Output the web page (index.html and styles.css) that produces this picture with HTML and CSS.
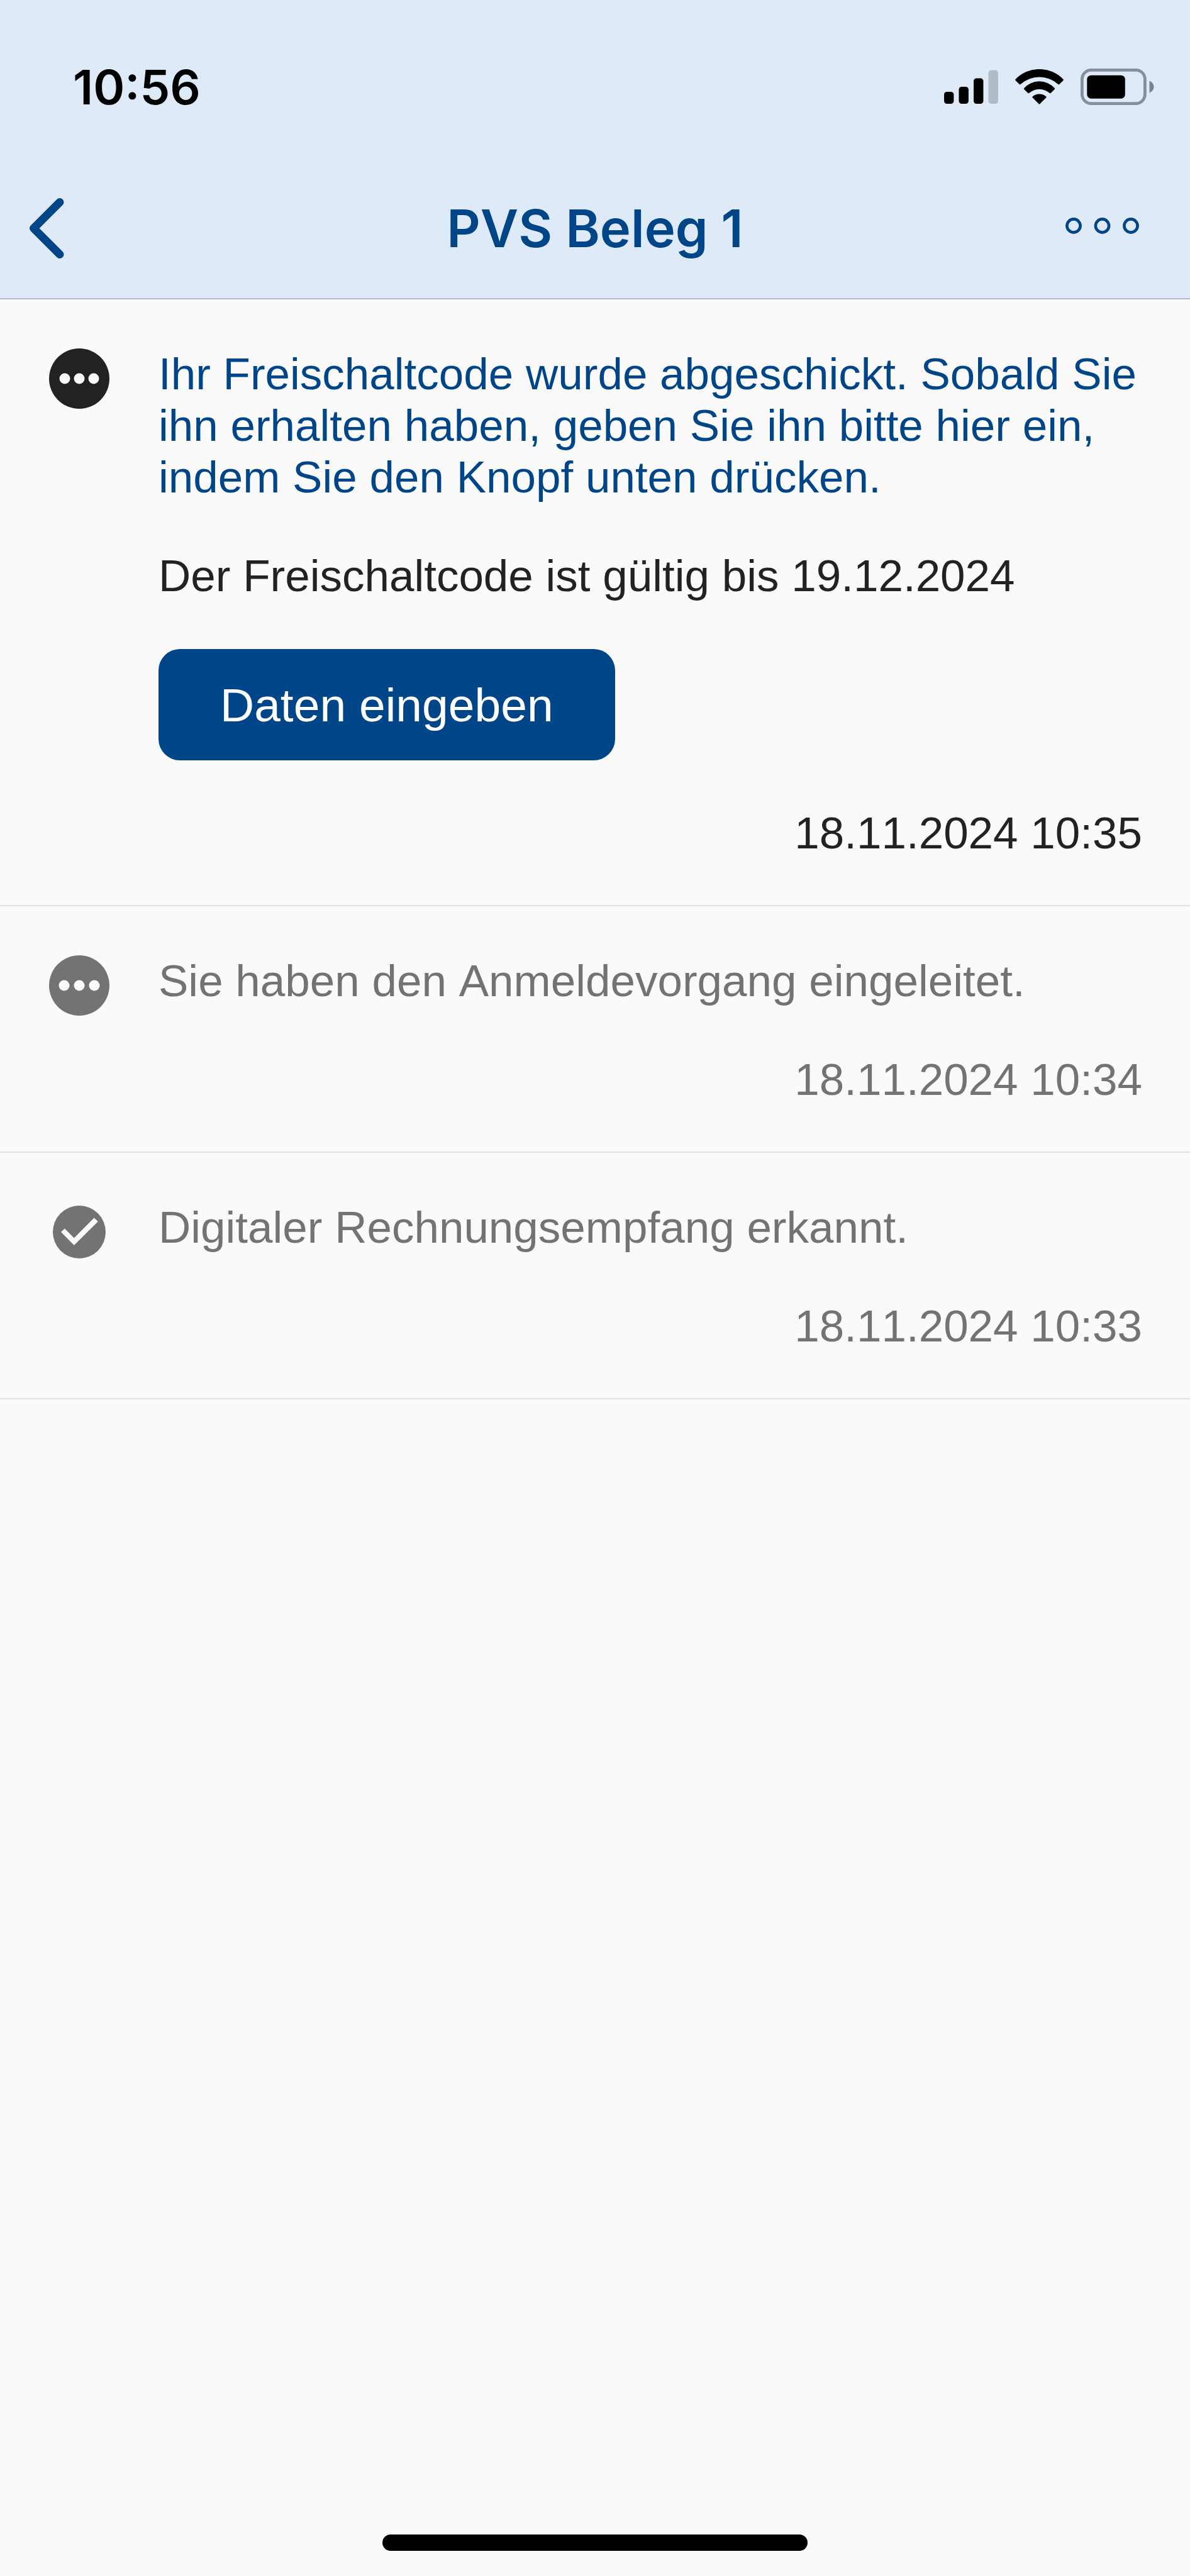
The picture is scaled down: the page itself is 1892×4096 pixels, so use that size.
FILE: index.html
```
<!DOCTYPE html>
<html lang="de">
<head>
<meta charset="utf-8">
<meta name="viewport" content="width=device-width, initial-scale=1">
<title>PVS Beleg 1</title>
<link rel="stylesheet" href="styles.css">
</head>
<body>
<header class="header">
  <div class="status-bar">
    <time class="clock">10:56</time>
    <div class="indicators">
      <svg width="86" height="56" viewBox="0 0 86 56" aria-hidden="true">
        <rect x="0" y="36" width="15.4" height="19" rx="4.5"/>
        <rect x="23.5" y="28" width="15.4" height="27" rx="4.5"/>
        <rect x="47" y="14.5" width="15.4" height="40.5" rx="4.5"/>
        <rect class="bar-off" x="70.5" y="1.5" width="15.4" height="53.5" rx="4.5"/>
      </svg>
      <svg width="77" height="56" viewBox="0 0 77 56" aria-hidden="true">
        <path d="M0.6 16A52.7 52.7 0 0 1 76.4 16Q77.4 17 76.4 18L70.2 24Q69.4 24.8 68.4 24A44.8 44.8 0 0 0 8.6 24Q7.6 24.8 6.8 24L0.6 18Q-0.4 17 0.6 16Z"/>
        <path d="M14.2 30.2A32.5 32.5 0 0 1 62.8 30.2Q63.7 31 62.8 31.9L56.6 38Q55.7 38.8 54.8 38A24.7 24.7 0 0 0 22.2 38Q21.3 38.8 20.4 38L14.2 31.9Q13.3 31 14.2 30.2Z"/>
        <path d="M27.7 43.6A16 16 0 0 1 49.3 43.6Q50.2 44.4 49.3 45.3L39.3 55.3Q38.5 56 37.7 55.3L27.7 45.3Q26.8 44.4 27.7 43.6Z"/>
      </svg>
      <svg width="117" height="58" viewBox="0 0 117 58" aria-hidden="true">
        <rect class="battery-case" x="2.4" y="2.4" width="100" height="53.2" rx="14.5"/>
        <rect x="10.3" y="10.7" width="60.5" height="37" rx="6.5"/>
        <path class="battery-tip" d="M109.5 19.5Q116.5 22.5 116.5 29T109.5 38.5Z"/>
      </svg>
    </div>
  </div>
  <nav class="nav-bar">
    <button class="icon-button back" type="button" aria-label="Zurück">
      <svg width="56" height="96" viewBox="0 0 56 96" aria-hidden="true">
        <path class="chevron" d="M49 6.5L7.5 48L49 89.5"/>
      </svg>
    </button>
    <h1 class="title">PVS Beleg 1</h1>
    <button class="icon-button menu" type="button" aria-label="Mehr">
      <svg class="menu-dots" width="118" height="26" viewBox="0 0 118 26" aria-hidden="true">
        <circle cx="13" cy="13" r="10.6"/>
        <circle cx="58.5" cy="13" r="10.6"/>
        <circle cx="104" cy="13" r="10.6"/>
      </svg>
    </button>
  </nav>
</header>
<main>
  <ol class="history">
    <li class="entry current">
      <svg class="entry-icon" width="96" height="96" viewBox="0 0 96 96" aria-hidden="true">
        <circle cx="48" cy="48" r="48"/>
        <g class="mark"><circle cx="25" cy="48" r="8.5"/><circle cx="48" cy="48" r="8.5"/><circle cx="71" cy="48" r="8.5"/></g>
      </svg>
      <div class="entry-body">
        <p class="message">Ihr Freischaltcode wurde abgeschickt. Sobald Sie ihn erhalten haben, geben Sie ihn bitte hier ein, indem Sie den Knopf unten drücken.</p>
        <p>Der Freischaltcode ist gültig bis 19.12.2024</p>
        <button class="primary" type="button">Daten eingeben</button>
        <time class="date" datetime="2024-11-18T10:35">18.11.2024 10:35</time>
      </div>
    </li>
    <li class="entry">
      <svg class="entry-icon" width="96" height="96" viewBox="0 0 96 96" aria-hidden="true">
        <circle cx="48" cy="48" r="48"/>
        <g class="mark"><circle cx="24" cy="48" r="8.5"/><circle cx="48" cy="48" r="8.5"/><circle cx="72" cy="48" r="8.5"/></g>
      </svg>
      <div class="entry-body">
        <p>Sie haben den Anmeldevorgang eingeleitet.</p>
        <time class="date" datetime="2024-11-18T10:34">18.11.2024 10:34</time>
      </div>
    </li>
    <li class="entry">
      <svg class="entry-icon" width="96" height="96" viewBox="0 0 96 96" aria-hidden="true">
        <circle cx="48" cy="48" r="42"/>
        <path class="mark" d="M19 48L24.8 42.4L39.8 57.4L71.6 25.4L77.8 31.2L39.8 69Z"/>
      </svg>
      <div class="entry-body">
        <p>Digitaler Rechnungsempfang erkannt.</p>
        <time class="date" datetime="2024-11-18T10:33">18.11.2024 10:33</time>
      </div>
    </li>
  </ol>
</main>
<div class="home-indicator"></div>
</body>
</html>
```
FILE: styles.css
```
* {
  box-sizing: border-box;
}

body {
  margin: 0;
  min-height: 100vh;
  display: flex;
  flex-direction: column;
  background: #fafafa;
  color: #737373;
  font-family: "Liberation Sans", Arial, sans-serif;
  font-size: 71px;
  line-height: 82px;
  font-kerning: none;
}

svg {
  display: block;
  flex: none;
}

.header {
  background: #deeaf8;
  border-bottom: 2px solid #b6b8c0;
  font-family: Inter, sans-serif;
  font-weight: 600;
}

.status-bar {
  display: flex;
  align-items: center;
  justify-content: space-between;
  height: 276px;
  padding: 0 57px 0 116px;
  color: #000;
}

.clock {
  font-size: 76px;
}

.indicators {
  display: flex;
  align-items: center;
  gap: 27px;
}

.bar-off {
  fill: #b1bcc7;
}

.battery-case {
  fill: none;
  stroke: #878e9a;
  stroke-width: 4.8;
}

.battery-tip {
  fill: #7b828d;
}

.nav-bar {
  display: grid;
  grid-template-columns: 1fr auto 1fr;
  align-items: center;
  height: 198px;
  padding: 0 46px 24px;
  color: #004587;
}

.icon-button {
  padding: 0;
  border: 0;
  background: none;
  color: inherit;
}

.back {
  justify-self: start;
}

.menu {
  justify-self: end;
  padding: 0 34px 8px 0;
}

.chevron {
  fill: none;
  stroke: currentColor;
  stroke-width: 13;
  stroke-linecap: round;
  stroke-linejoin: round;
}

.menu-dots {
  fill: none;
  stroke: currentColor;
  stroke-width: 4.6;
}

.title {
  margin: 0;
  font-size: 83px;
  font-weight: 600;
  font-kerning: normal;
}

.history {
  margin: 0;
  padding: 0;
  list-style: none;
}

.entry {
  display: flex;
  gap: 78px;
  padding: 78px 76px 73px 78px;
  border-bottom: 2px solid #e0e0e0;
}

.current {
  color: #222;
}

.entry-icon {
  fill: currentColor;
}

.mark {
  fill: #fafafa;
}

.entry-body {
  flex: 1;
  display: flex;
  flex-direction: column;
  gap: 75px;
}

.entry-body p {
  margin: 0;
}

.entry-body .message {
  color: #004587;
}

.primary {
  align-self: flex-start;
  height: 177px;
  padding: 0 98px;
  border: 0;
  border-radius: 34px;
  background: #004587;
  color: #fff;
  font: inherit;
  font-size: 75px;
}

.date {
  align-self: flex-end;
}

.home-indicator {
  width: 676px;
  height: 26px;
  margin: auto auto 40px;
  border-radius: 13px;
  background: #000;
}
```
